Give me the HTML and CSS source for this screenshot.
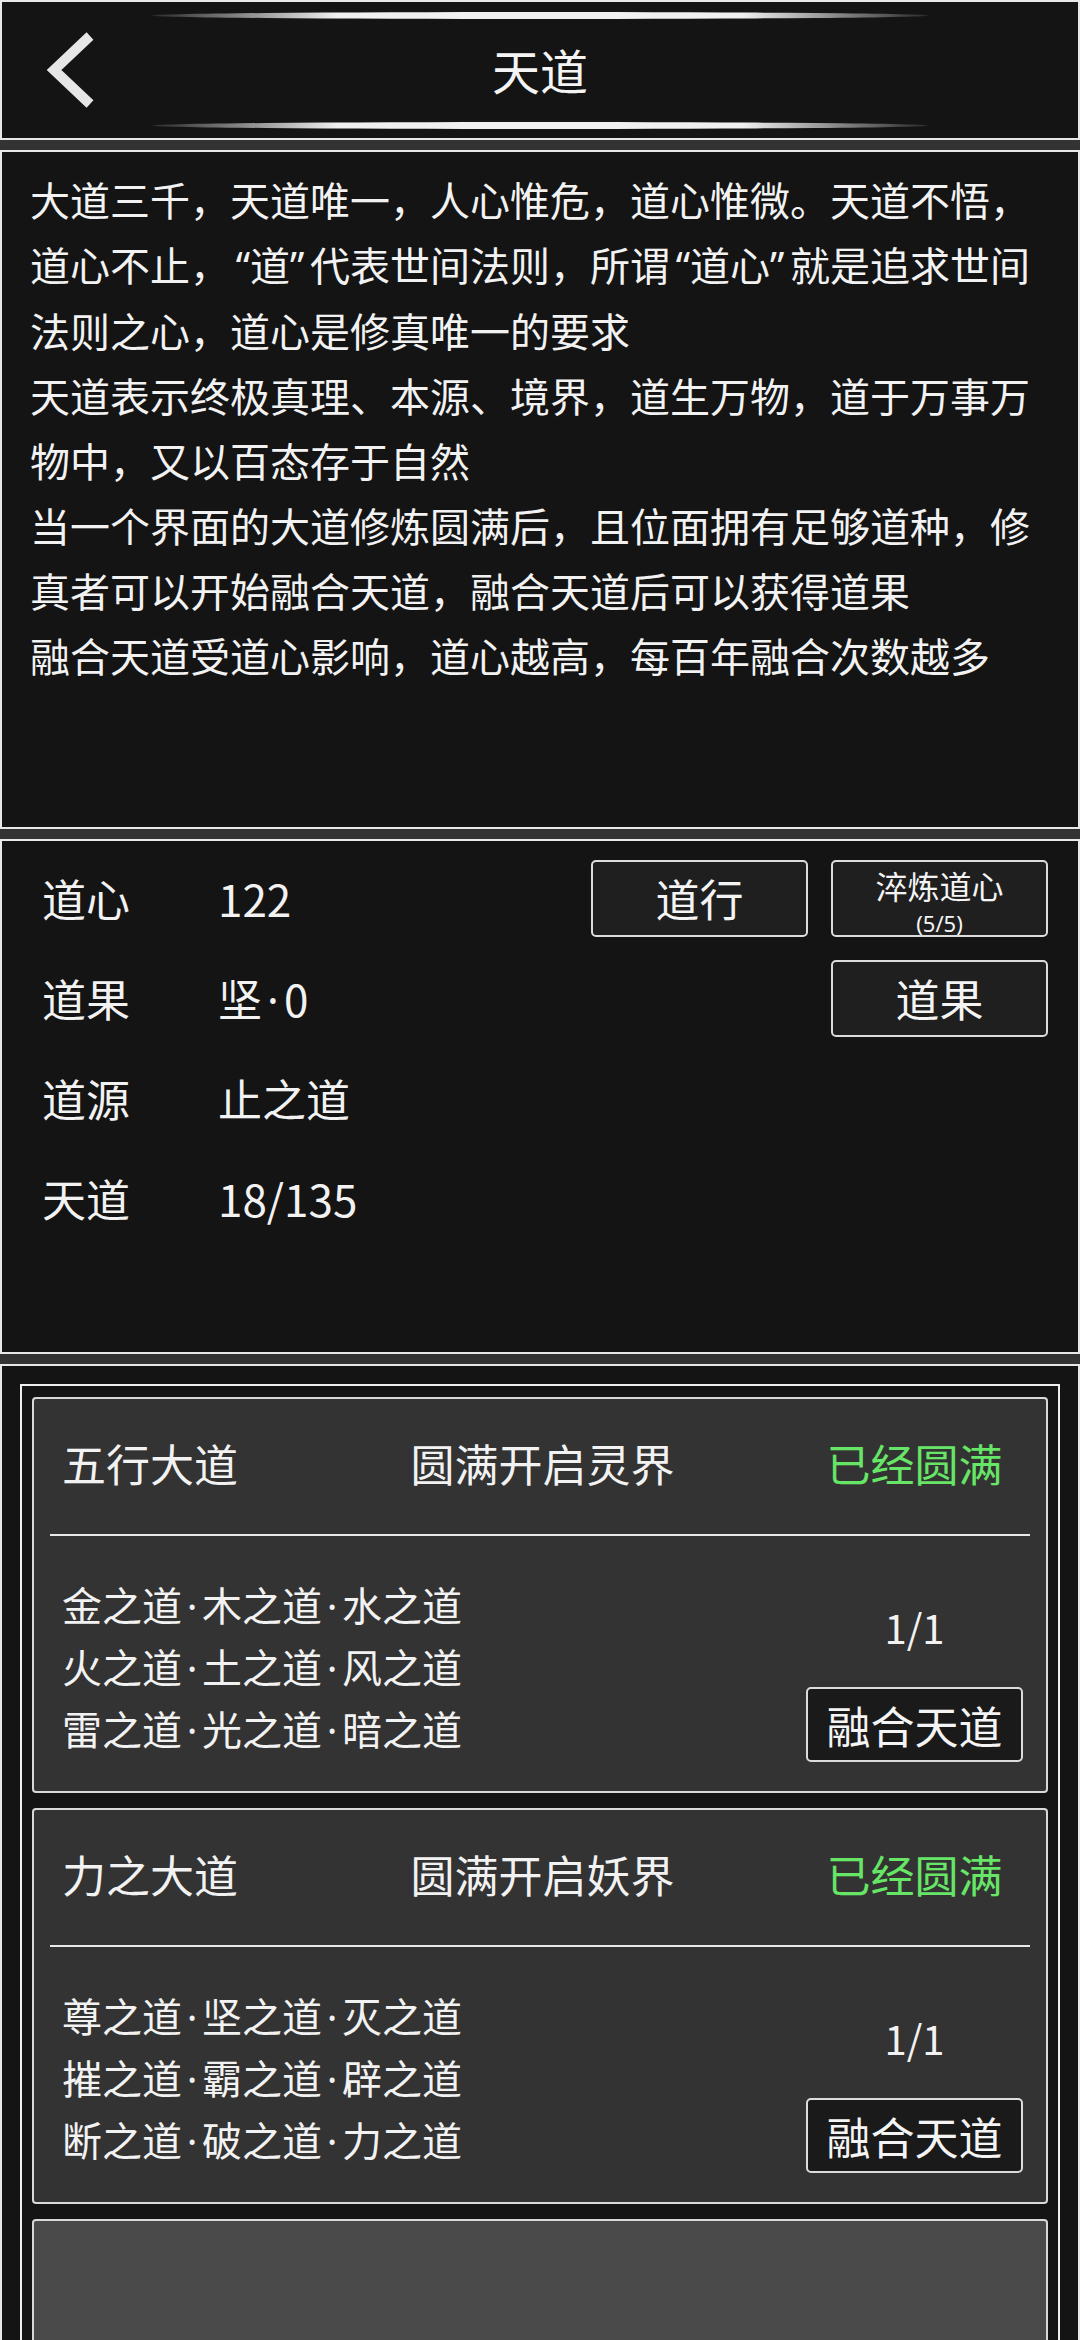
FILE: index.html
```html
<!DOCTYPE html>
<html lang="zh-CN">

<head>
    <meta charset="UTF-8">
    <meta name="viewport" content="width=device-width, initial-scale=1.0">
    <title>天道</title>
    <link rel="stylesheet" href="styles.css">
</head>

<body>
    <div class="screen">
        <header class="panel topbar">
            <div class="back">
                <svg width="120" height="136" viewBox="0 0 120 136">
                    <polyline points="88,34 52,68 88,102" fill="none" stroke="#e6e6e6" stroke-width="10" stroke-linejoin="miter" />
                </svg>
            </div>
            <div class="title-col">
                <div class="deco"></div>
                <h1>天道</h1>
                <div class="deco"></div>
            </div>
            <div></div>
        </header>

        <section class="panel intro">
            <p>大道三千，天道唯一，人心惟危，道心惟微。天道不悟，<br>道心不止，<span class="q-open">“</span>道<span class="q-close">”</span>代表世间法则，所谓<span class="q-open">“</span>道心<span class="q-close">”</span>就是追求世间<br>法则之心，道心是修真唯一的要求</p>
            <p>天道表示终极真理、本源、境界，道生万物，道于万事万<br>物中，又以百态存于自然</p>
            <p>当一个界面的大道修炼圆满后，且位面拥有足够道种，修<br>真者可以开始融合天道，融合天道后可以获得道果</p>
            <p>融合天道受道心影响，道心越高，每百年融合次数越多</p>
        </section>

        <section class="panel stats">
            <div class="stat-label">道心</div>
            <div class="stat-value">122</div>
            <div class="cell"><button class="btn">道行</button></div>
            <div class="cell"><button class="btn btn-two"><span>淬炼道心</span><small>(5/5)</small></button></div>

            <div class="stat-label">道果</div>
            <div class="stat-value">坚<span class="dot">·</span>0</div>
            <div class="cell"></div>
            <div class="cell"><button class="btn">道果</button></div>

            <div class="stat-label">道源</div>
            <div class="stat-value">止之道</div>
            <div class="cell"></div>
            <div class="cell"></div>

            <div class="stat-label">天道</div>
            <div class="stat-value">18/135</div>
            <div class="cell"></div>
            <div class="cell"></div>
        </section>

        <section class="panel list">
            <div class="frame">
                <div class="card">
                    <div class="card-head">
                        <span class="head-left">五行大道</span>
                        <span class="head-mid">圆满开启灵界</span>
                        <span class="head-right">已经圆满</span>
                    </div>
                    <div class="divider"></div>
                    <div class="card-body">
                        <div class="dao-list">
                            <div>金之道<span class="dot">·</span>木之道<span class="dot">·</span>水之道</div>
                            <div>火之道<span class="dot">·</span>土之道<span class="dot">·</span>风之道</div>
                            <div>雷之道<span class="dot">·</span>光之道<span class="dot">·</span>暗之道</div>
                        </div>
                        <div class="fuse">
                            <div class="count">1/1</div>
                            <button class="btn btn-fuse">融合天道</button>
                        </div>
                    </div>
                </div>

                <div class="card">
                    <div class="card-head">
                        <span class="head-left">力之大道</span>
                        <span class="head-mid">圆满开启妖界</span>
                        <span class="head-right">已经圆满</span>
                    </div>
                    <div class="divider"></div>
                    <div class="card-body">
                        <div class="dao-list">
                            <div>尊之道<span class="dot">·</span>坚之道<span class="dot">·</span>灭之道</div>
                            <div>摧之道<span class="dot">·</span>霸之道<span class="dot">·</span>辟之道</div>
                            <div>断之道<span class="dot">·</span>破之道<span class="dot">·</span>力之道</div>
                        </div>
                        <div class="fuse">
                            <div class="count">1/1</div>
                            <button class="btn btn-fuse">融合天道</button>
                        </div>
                    </div>
                </div>

                <div class="card card-empty"></div>
            </div>
        </section>
    </div>
</body>

</html>
```

FILE: styles.css
```css
body {
    margin: 0;
    background-color: #333;
    font-family: "Noto Sans CJK SC", "Noto Sans", sans-serif;
    color: #f2f2f2;
}

.screen {
    width: 1080px;
    height: 2340px;
    display: flex;
    flex-direction: column;
    gap: 10px;
    overflow: hidden;
}

.panel {
    box-sizing: border-box;
    background: #141414;
    border: 2px solid #e8e8e8;
    flex-shrink: 0;
}

/* half-width quotes and dots */
.q-open,
.q-close,
.dot {
    display: inline-block;
    width: 0.5em;
    font-family: "Noto Sans", sans-serif;
}

.q-open {
    text-align: right;
}

.q-close {
    text-align: left;
}

.dot {
    text-align: center;
}

/* top bar */
.topbar {
    height: 140px;
    display: grid;
    grid-template-columns: 149px 778px 149px;
}

.back svg {
    display: block;
}

.title-col {
    display: flex;
    flex-direction: column;
    align-items: center;
}

.deco {
    width: 778px;
    height: 7px;
    border-radius: 50%;
    background: linear-gradient(90deg, #2a2a2a 0%, #8a8a8a 12%, #f0f0f0 24%, #f0f0f0 76%, #8a8a8a 88%, #2a2a2a 100%);
}

.title-col .deco:first-child {
    margin-top: 10px;
}

.title-col .deco:last-child {
    margin-bottom: 9px;
}

h1 {
    flex: 1;
    margin: 0;
    padding-bottom: 4px;
    display: flex;
    align-items: center;
    font-size: 48px;
    font-weight: 400;
    color: #f4f4f4;
}

/* description */
.intro {
    height: 679px;
    padding: 15px 28px 0;
    font-size: 40px;
    line-height: 65px;
    white-space: nowrap;
}

.intro p {
    margin: 0;
}

/* stats */
.stats {
    height: 515px;
    padding: 7px 30px 0 40px;
    display: grid;
    grid-template-columns: 153px 1fr 217px 217px;
    grid-auto-rows: 100px;
    column-gap: 23px;
    align-items: center;
    font-size: 44px;
}

.btn {
    box-sizing: border-box;
    width: 217px;
    height: 77px;
    padding: 0;
    background: #1f1f1f;
    border: 2px solid #dcdcdc;
    border-radius: 5px;
    color: #f4f4f4;
    font-family: inherit;
    font-size: 44px;
    line-height: 1;
    cursor: pointer;
}

.btn-two {
    display: flex;
    flex-direction: column;
    align-items: center;
    justify-content: flex-start;
    padding-top: 6px;
    font-size: 32px;
    line-height: 34px;
}

.btn-two small {
    margin-top: 10px;
    font-family: "Noto Sans", sans-serif;
    font-size: 22px;
    line-height: 22px;
}

/* list */
.list {
    flex: 1;
    padding: 18px 18px 19px;
    display: flex;
}

.frame {
    flex: 1;
    box-sizing: border-box;
    border: 2px solid #eeeeee;
    padding: 11px 10px 0;
    display: flex;
    flex-direction: column;
    gap: 15px;
    overflow: hidden;
}

.card {
    box-sizing: border-box;
    height: 396px;
    flex-shrink: 0;
    background: #333;
    border: 2px solid #d8d8d8;
    border-radius: 4px;
}

.card-empty {
    background: #4a4a4a;
}

.card-head {
    box-sizing: border-box;
    height: 135px;
    display: grid;
    grid-template-columns: 1fr auto 1fr;
    align-items: center;
    padding: 0 23px 8px 28px;
    font-size: 44px;
}

.head-right {
    justify-self: end;
    width: 217px;
    text-align: center;
    color: #66e566;
}

.divider {
    height: 2px;
    margin: 0 16px;
    background: #e8e8e8;
}

.card-body {
    display: flex;
    justify-content: space-between;
    padding: 38px 23px 0 28px;
    font-size: 40px;
    line-height: 60px;
}

.fuse {
    margin-top: 23px;
    width: 217px;
    display: flex;
    flex-direction: column;
    align-items: center;
}

.count {
    margin-bottom: 30px;
}

.btn-fuse {
    height: 75px;
    background: #1a1a1a;
}
```
